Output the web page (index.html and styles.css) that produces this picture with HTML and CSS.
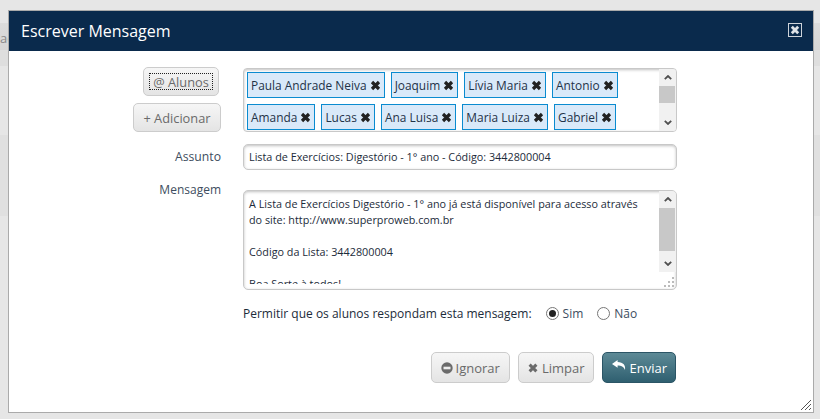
FILE: index.html
```html
<!DOCTYPE html>
<html lang="pt">
<head>
<meta charset="utf-8">
<title>Escrever Mensagem</title>
<link rel="stylesheet" href="styles.css">
</head>
<body>
<div class="backdrop">
  <div class="bg-band bg-top"><span class="bg-text">ac</span></div>
  <div class="bg-band bg-mid"></div>
</div>
<section class="dialog">
  <header class="titlebar">
    <h1>Escrever Mensagem</h1>
    <button class="close" aria-label="Fechar"><svg viewBox="0 0 14 14" width="14" height="14"><rect x="0.5" y="0.5" width="13" height="13" fill="none" stroke="#cdd3da"/><path d="M3.800 3.800l6.400 6.400M10.200 3.800l-6.400 6.400" stroke="#dfe3e8" stroke-width="2.800"/></svg></button>
  </header>
  <div class="body">
    <div class="row row-to">
      <div class="label-col stack">
        <button class="btn btn-alunos"><span class="focus">@ Alunos</span></button>
        <button class="btn btn-add">+ Adicionar</button>
      </div>
      <div class="field tags">
        <div class="tag-wrap">
          <span class="tag">Paula Andrade Neiva <svg class="x"><use href="#ix"/></svg></span>
          <span class="tag">Joaquim <svg class="x"><use href="#ix"/></svg></span>
          <span class="tag">Lívia Maria <svg class="x"><use href="#ix"/></svg></span>
          <span class="tag">Antonio <svg class="x"><use href="#ix"/></svg></span>
          <span class="tag">Amanda <svg class="x"><use href="#ix"/></svg></span>
          <span class="tag">Lucas <svg class="x"><use href="#ix"/></svg></span>
          <span class="tag">Ana Luisa <svg class="x"><use href="#ix"/></svg></span>
          <span class="tag">Maria Luiza <svg class="x"><use href="#ix"/></svg></span>
          <span class="tag">Gabriel <svg class="x"><use href="#ix"/></svg></span>
        </div>
        <div class="scrollbar sb-tags"><svg class="arrow" viewBox="0 0 8 5"><path d="M.8 4.200l3.200-3.200 3.200 3.200" fill="none" stroke="#505050" stroke-width="1.800"/></svg><div class="track"><div class="thumb"></div></div><svg class="arrow" viewBox="0 0 8 5"><path d="M.8.800l3.200 3.200 3.200-3.200" fill="none" stroke="#505050" stroke-width="1.800"/></svg></div>
      </div>
    </div>
    <div class="row row-subject">
      <label class="label-col lbl lbl-subject">Assunto</label>
      <div class="field subject">Lista de Exercícios: Digestório - 1° ano - Código: 3442800004</div>
    </div>
    <div class="row row-msg">
      <label class="label-col lbl lbl-msg">Mensagem</label>
      <div class="field msg">
        <div class="msg-text">
          <p>A Lista de Exercícios Digestório - 1° ano já está disponível para acesso através do site: http://www.superproweb.com.br</p>
          <p>Código da Lista: 3442800004</p>
          <p>Boa Sorte à todos!</p>
        </div>
        <div class="scrollbar sb-msg"><svg class="arrow" viewBox="0 0 8 5"><path d="M.8 4.200l3.200-3.200 3.200 3.200" fill="none" stroke="#505050" stroke-width="1.800"/></svg><div class="track"><div class="thumb"></div></div><svg class="arrow" viewBox="0 0 8 5"><path d="M.8.800l3.200 3.200 3.200-3.200" fill="none" stroke="#505050" stroke-width="1.800"/></svg></div>
        <svg class="grip" viewBox="0 0 14 14" width="14" height="14"><g fill="#bbb"><rect x="10" y="2" width="2" height="2"/><rect x="6" y="6" width="2" height="2"/><rect x="10" y="6" width="2" height="2"/><rect x="2" y="10" width="2" height="2"/><rect x="6" y="10" width="2" height="2"/><rect x="10" y="10" width="2" height="2"/></g></svg>
      </div>
    </div>
    <div class="row row-allow">
      <span class="allow-text">Permitir que os alunos respondam esta mensagem:</span>
      <span class="radio on"></span><span class="radio-lbl">Sim</span>
      <span class="radio"></span><span class="radio-lbl">Não</span>
    </div>
    <div class="actions">
      <button class="btn btn-ignore"><svg class="ic" viewBox="0 0 12 12"><circle cx="6" cy="6" r="5.700" fill="#6b6b6b"/><rect x="2.500" y="4.700" width="7" height="2.600" fill="#eee"/></svg>Ignorar</button>
      <button class="btn btn-clear"><svg class="ic ic-x" viewBox="0 0 10 10"><path d="M1.600 1.600l6.800 6.800M8.400 1.600l-6.800 6.800" stroke="#6b6b6b" stroke-width="3"/></svg>Limpar</button>
      <button class="btn primary"><svg class="ic-reply" viewBox="0 0 14 10"><path d="M5.600 0L0 3.900l5.600 3.900V5.400c3.600 0 5.900.8 7.400 4.600.8-4.600-1.600-7.600-7.400-7.900z" fill="#fff"/></svg>Enviar</button>
    </div>
  </div>
  <svg class="resize" viewBox="0 0 12 12" width="12" height="12"><path d="M1 11L11 1M5 11l6-6M9 11l2-2" stroke="#555" stroke-width="1"/></svg>
</section>
<svg width="0" height="0" class="defs"><defs><symbol id="ix" viewBox="0 0 11 11"><path d="M2 2l7 7M9 2l-7 7" stroke="#222" stroke-width="3.200"/></symbol></defs></svg>
</body>
</html>
```
FILE: styles.css
```css
*{box-sizing:border-box}
html,body{margin:0;height:100%}
body{width:820px;height:419px;overflow:hidden;background:#e6e6e6;font-family:"Open Sans",sans-serif;font-size:13px;color:#1c2b3a;position:relative}
.backdrop{position:absolute;inset:0}
.bg-band{position:absolute;left:0;right:0}
.bg-top{top:23px;height:43px;background:linear-gradient(#dcdcdc,#d6d6d6 62%,#dedede 62%)}
.bg-text{color:#8a8a8a;font-size:13px;position:absolute;left:0;top:6px}
.bg-mid{top:134px;height:82px;background:#e0e0e0;border-top:1px solid #e6e6e6}
.dialog{position:absolute;left:8px;top:10px;width:806px;height:403px;background:#fff;border:1px solid #aaa}
.titlebar{height:40px;background:#0a2a4c;display:flex;align-items:center;justify-content:space-between;padding:0 11px 0 12px}
.titlebar h1{margin:0;font-size:16px;font-weight:400;color:#fff}
.close{background:none;border:0;padding:0;display:flex;margin-top:-2px}
.body{padding:17px 0 0}
.row{display:flex;padding-right:136px}
.label-col{width:213px;flex:none;text-align:right}
.stack{display:flex;flex-direction:column;align-items:flex-end;gap:7px;padding-right:3px;margin-top:-1px}
.field{margin-left:21px;border:1px solid #c8c8c8;border-radius:5px;box-shadow:inset 0 1px 3px rgba(0,0,0,.25);background:#fff}
.btn{font-family:inherit;font-size:13px;color:#6a6a6a;height:31px;padding:0 9px;border:1px solid #ccc;border-radius:5px;background:linear-gradient(#f6f6f6,#e4e4e4);display:inline-flex;align-items:center;gap:3px}
.btn-alunos{height:29px;width:76px;justify-content:center;padding:0;font-size:12.800px}
.btn-add{height:29px;width:88px;justify-content:center;padding:0;margin-right:-2px;font-size:12.800px}
.focus{outline:1px dotted #222;padding:1px 3px 0;line-height:14px}
.tags{width:435px;height:64px;display:flex;overflow:hidden;border-radius:4px}
.tag-wrap{width:417px;padding:3px;display:flex;flex-wrap:wrap;gap:6px;align-content:flex-start;font-size:11.900px}
.tag{height:26px;padding:0 3px;border:1px solid #0a8bd0;background:#d9e9f9;color:#1f3348;display:inline-flex;align-items:center;white-space:pre}
.x{width:11px;height:11px}
.scrollbar{width:17px;background:#f1f1f1;display:flex;flex-direction:column;flex:none;align-self:stretch}
.arrow{width:8px;height:5px;margin:6px auto;flex:none}
.track{flex:1;padding:0 1px 0 0}
.thumb{background:#c8c8c8}
.sb-tags .thumb{height:17px}
.sb-msg .thumb{height:43px}
.row-subject{margin-top:12px}
.lbl{color:#3d4d60;font-size:12px;padding-right:1px;line-height:26px}
.lbl-subject{font-size:12.200px}
.subject{width:435px;height:26px;line-height:24px;padding-left:5px;font-size:10.800px}
.row-msg{margin-top:20px}
.lbl-msg{margin-top:-13px}
.msg{width:435px;height:100px;position:relative;display:flex;overflow:hidden;font-size:10.800px;line-height:16px}
.msg-text{width:417px;height:93px;padding:5px 14px 0 5px;overflow:hidden}
.msg-text p{margin:0 0 16px}
.sb-msg{height:81px;align-self:flex-start}
.grip{position:absolute;right:0;bottom:0}
.row-allow{padding-left:234px;margin-top:13px;align-items:center;height:20px;font-size:12px}
.allow-text{margin-right:14px}
.radio{width:13px;height:13px;border:1px solid #777;border-radius:50%;background:#fff;margin-right:4px;position:relative}
.radio.on::after{content:"";position:absolute;inset:2px;border-radius:50%;background:#222}
.radio-lbl{margin-right:14px;color:#3d4d60}
.actions{display:flex;gap:8px;justify-content:flex-end;padding-right:137px;margin-top:29px}
.btn-clear{gap:4px}
.primary{background:linear-gradient(#5d8a96,#2f5f70);border-color:#2b5566;color:#fff;padding:0 8px 0 9px}
.ic{width:12px;height:12px}
.ic-x{width:10px;height:10px}
.ic-reply{width:14px;height:10px;margin-top:-5px}
.resize{position:absolute;right:1px;bottom:1px}
.defs{position:absolute}
```
